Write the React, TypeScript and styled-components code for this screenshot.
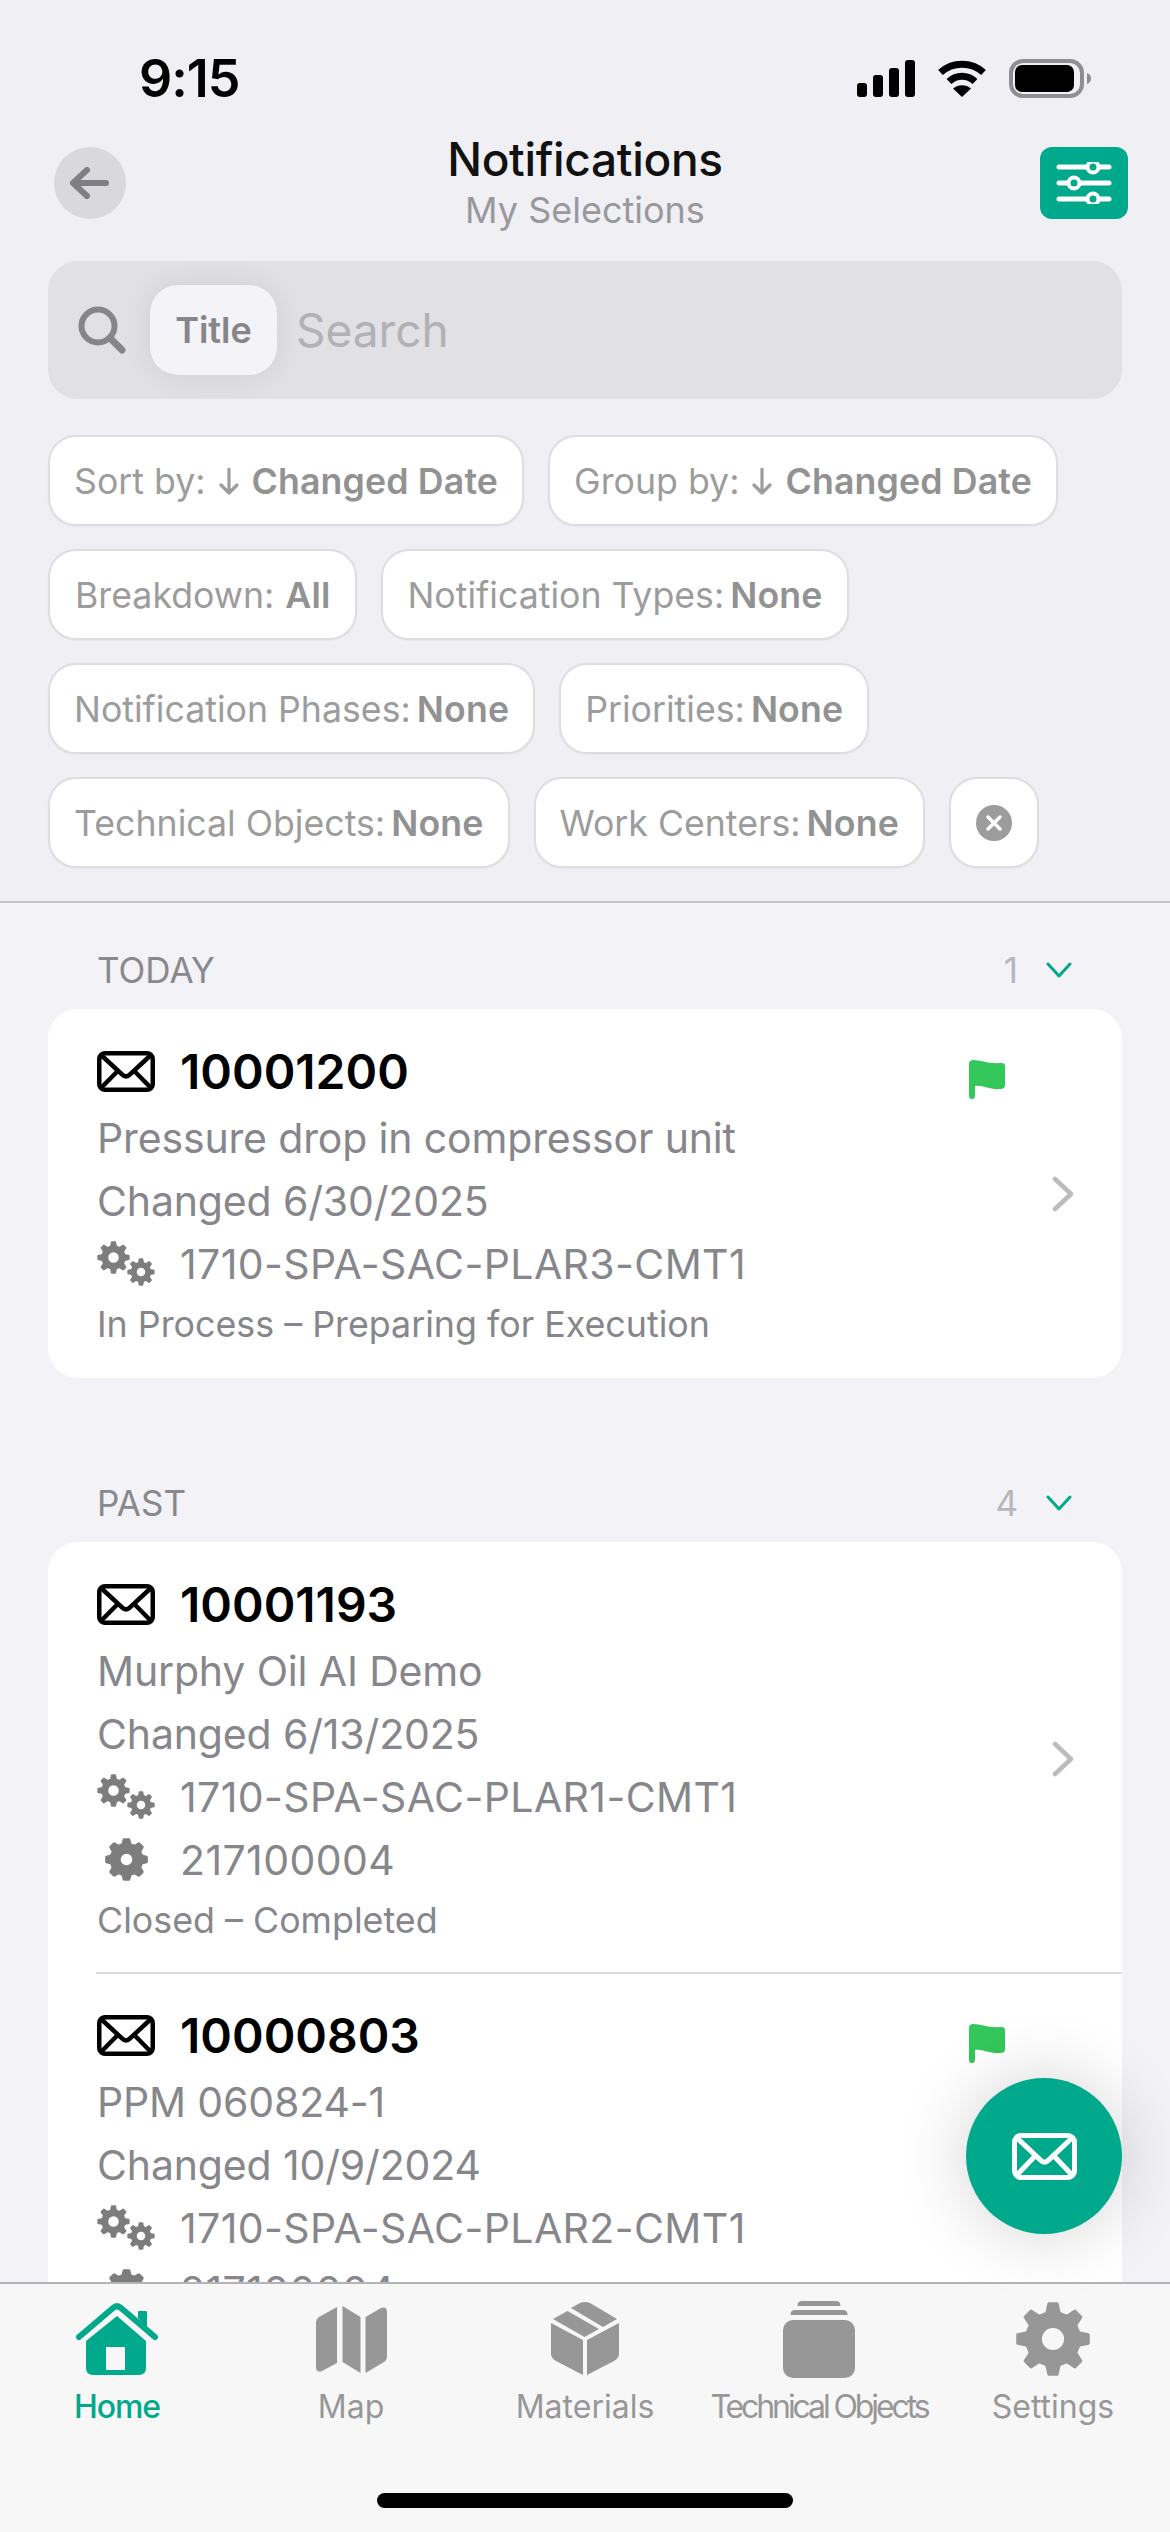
import * as React from 'react'
import styled, { createGlobalStyle } from 'styled-components'

const GREEN = '#00a98b'
const ICON_GREY = '#979797'

const GlobalStyle = createGlobalStyle`
	html, body {
		margin: 0;
		padding: 0;
		background: #f1f1f6;
		font-family: Inter, "Liberation Sans", sans-serif;
	}
	* { box-sizing: border-box; }
`

const Page = styled.div`
	position: relative;
	display: flex;
	flex-direction: column;
	width: 1170px;
	height: 2532px;
	overflow: hidden;
	background: #f2f2f7;
`

const TopPane = styled.div`
	flex: none;
	height: 903px;
	background: #efeff4;
	border-bottom: 2px solid #c3c3c8;
`

const StatusBar = styled.div`
	display: flex;
	align-items: center;
	justify-content: space-between;
	height: 147px;
	padding: 10px 79px 0 139px;
`

const Clock = styled.span`
	font-size: 52px;
	font-weight: 600;
	letter-spacing: -1px;
	color: #000;
`

const StatusIcons = styled.div`
	display: flex;
	align-items: center;
	gap: 22px;
`

const Header = styled.div`
	display: grid;
	grid-template-columns: 72px 1fr 88px;
	align-items: start;
	height: 114px;
	padding: 0 42px 0 54px;
`

const RoundButton = styled.div`
	display: flex;
	align-items: center;
	justify-content: center;
	width: 72px;
	height: 72px;
	border-radius: 50%;
	background: #d8d8dd;
`

const FilterButton = styled.div`
	display: flex;
	align-items: center;
	justify-content: center;
	width: 88px;
	height: 72px;
	border-radius: 12px;
	background: ${GREEN};
`

const HeaderTitle = styled.div`
	margin-top: -17px;
	padding-left: 4px;
	text-align: center;
`

const Title = styled.div`
	height: 58px;
	font-size: 46px;
	line-height: 58px;
	font-weight: 500;
	letter-spacing: -0.3px;
	color: #111;
`

const Subtitle = styled.div`
	font-size: 36px;
	line-height: 44px;
	color: #98989d;
`

const SearchBar = styled.div`
	display: flex;
	align-items: center;
	height: 138px;
	margin: 0 48px;
	padding: 0 0 0 30px;
	border-radius: 30px;
	background: #e0e0e5;
`

const SearchChip = styled.div`
	display: flex;
	align-items: center;
	justify-content: center;
	width: 127px;
	height: 90px;
	margin-left: 24px;
	border-radius: 28px;
	background: #f3f3f8;
	box-shadow: 0 0 28px rgba(0, 0, 0, 0.08);
	font-size: 36px;
	font-weight: 600;
	color: #85858a;
`

const SearchPlaceholder = styled.span`
	margin-left: 19px;
	font-size: 46px;
	color: #b1b1b6;
`

const Chips = styled.div`
	display: flex;
	flex-wrap: wrap;
	gap: 23px 24px;
	margin-top: 36px;
	padding: 0 48px;
`

const Chip = styled.div<{ $gap?: number; $padding?: number }>`
	display: flex;
	align-items: center;
	justify-content: center;
	gap: ${props => props.$gap ?? 6}px;
	height: 91px;
	padding: 0 ${props => props.$padding ?? 24}px;
	border: 2px solid #dddde2;
	border-radius: 28px;
	background: #fff;
	box-shadow: 0 1px 2px rgba(0, 0, 0, 0.04);
	font-size: 35.7px;
	color: #9c9c9c;
	white-space: nowrap;
`

const ChipValue = styled.b`
	font-weight: 600;
	letter-spacing: 0.15px;
	color: #929292;
`

const ClearChip = styled(Chip)`
	width: 90px;
	padding: 0;
`

const List = styled.div`
	flex: 1;
	min-height: 0;
	overflow: hidden;
	padding: 47px 48px 0;
`

const SectionHead = styled.div`
	display: flex;
	align-items: center;
	height: 40px;
	margin-bottom: 19px;
	padding: 0 50px 0 49px;
	font-size: 35px;
	color: #88888d;
`

const SectionName = styled.span`
	flex: 1;
`

const SectionCount = styled.span`
	margin-right: 28px;
	color: #b6b6bb;
`

const Card = styled.div`
	margin-bottom: 105px;
	border-radius: 30px;
	background: #fff;
`

const Item = styled.div`
	display: grid;
	grid-template-columns: 1fr 40px 24px;
	column-gap: 43px;
	padding: 31px 47px 26px 49px;
`

const ItemBody = styled.div`
	min-width: 0;
`

const ItemTitle = styled.div`
	display: flex;
	align-items: center;
	gap: 25px;
	height: 62px;
	margin-bottom: 4px;
	font-size: 48px;
	font-weight: 600;
	color: #000;
`

const Row = styled.div`
	display: flex;
	align-items: center;
	gap: 25px;
	height: 63px;
	font-size: 41px;
	letter-spacing: -0.15px;
	color: #86868b;
`

const RowCode = styled.span`
	letter-spacing: 0.4px;
`

const IconSlot = styled.span`
	display: flex;
	justify-content: center;
	width: 58px;
`

const StatusRow = styled.div`
	display: flex;
	align-items: center;
	height: 57px;
	font-size: 35.8px;
	color: #86868b;
`

const FlagSlot = styled.div`
	padding-top: 19px;
`

const ChevronSlot = styled.div`
	align-self: center;
`

const Divider = styled.div`
	height: 2px;
	margin: -2px 0 -1px 48px;
	background: #dcdce0;
`

const Fab = styled.div`
	position: absolute;
	right: 48px;
	bottom: 298px;
	display: flex;
	align-items: center;
	justify-content: center;
	width: 156px;
	height: 156px;
	border-radius: 50%;
	background: ${GREEN};
	box-shadow: 0 0 70px rgba(0, 0, 0, 0.18);
`

const TabBar = styled.div`
	position: relative;
	flex: none;
	display: flex;
	flex-direction: column;
	height: 250px;
	border-top: 2px solid #b4b4b8;
	background: #f7f7f7;
`

const Tabs = styled.div`
	display: grid;
	grid-template-columns: repeat(5, 234px);
	padding-top: 16px;
`

const Tab = styled.div<{ $active?: boolean }>`
	display: flex;
	flex-direction: column;
	align-items: center;
	font-size: 32px;
	color: ${props => (props.$active ? GREEN : ICON_GREY)};
	font-weight: ${props => (props.$active ? 500 : 400)};
	letter-spacing: ${props => (props.$active ? '-1.1px' : '0')};
`

const TabIcon = styled.div`
	display: flex;
	align-items: center;
	justify-content: center;
	height: 78px;
	margin-bottom: 9px;
`

const TabLabel = styled.span<{ $tight?: boolean }>`
	line-height: 40px;
	white-space: nowrap;
	${props => props.$tight && 'letter-spacing: -3.1px;'}
`

const HomeIndicator = styled.div`
	align-self: center;
	width: 416px;
	height: 15px;
	margin-top: auto;
	margin-bottom: 24px;
	border-radius: 8px;
	background: #000;
`

// teeth are straight-sided, rounded afterwards by the round stroke join
const gearPath = (cx: number, cy: number, outer: number, root: number, teeth: number) => {
	const points: string[] = []
	const step = (Math.PI * 2) / teeth
	for (let i = 0; i < teeth; i++) {
		const a = i * step - Math.PI / 2
		const offsets: [number, number][] = [
			[-0.3, root],
			[-0.15, outer],
			[0.15, outer],
			[0.3, root],
		]
		offsets.forEach(([o, r]) => {
			const t = a + o * step
			points.push(`${(cx + Math.cos(t) * r).toFixed(2)} ${(cy + Math.sin(t) * r).toFixed(2)}`)
		})
	}
	return `M${points.join('L')}Z`
}

const circlePath = (cx: number, cy: number, r: number) =>
	`M${cx - r} ${cy}a${r} ${r} 0 1 0 ${r * 2} 0a${r} ${r} 0 1 0 ${-r * 2} 0Z`

const SignalIcon = () => (
	<svg width="58" height="37" viewBox="0 0 58 37">
		<rect x="0" y="23" width="10" height="14" rx="3" />
		<rect x="16" y="15" width="10" height="22" rx="3" />
		<rect x="32" y="8" width="10" height="29" rx="3" />
		<rect x="48" y="0" width="10" height="37" rx="3" />
	</svg>
)

const WifiIcon = () => (
	<svg width="50" height="37" viewBox="0 0 50 37" fill="none">
		<path d="M3.5 12.5C15.5 1.5 34.5 1.5 46.5 12.5" stroke="#000" strokeWidth="7" />
		<path d="M12 21.5C19.5 14.5 30.5 14.5 38 21.5" stroke="#000" strokeWidth="7" />
		<path d="M25 37L16 28.5C21 24 29 24 34 28.5Z" fill="#000" />
	</svg>
)

const BatteryIcon = () => (
	<svg width="82" height="39" viewBox="0 0 82 39">
		<rect x="2" y="2" width="71" height="35" rx="12" fill="none" stroke="#8e8e93" strokeWidth="4" />
		<rect x="6" y="6" width="59" height="27" rx="7" fill="#000" />
		<path d="M78 14c3 1 4 3 4 5.500s-1 4.500-4 5.500Z" fill="#8e8e93" />
	</svg>
)

const BackIcon = () => (
	<svg width="40" height="32" viewBox="0 0 40 32" fill="none" stroke="#7e7e84" strokeWidth="6" strokeLinecap="round" strokeLinejoin="round">
		<path d="M17 3L3 16L17 29M3 16H36" />
	</svg>
)

const FilterIcon = () => (
	<svg width="56" height="42" viewBox="0 0 56 42" fill="none">
		{[
			{ y: 5, x: 37 },
			{ y: 21, x: 18 },
			{ y: 37, x: 37 },
		].map(({ y, x }) => (
			<React.Fragment key={y}>
				<line x1="3" x2="53" y1={y} y2={y} stroke="#fff" strokeWidth="5" strokeLinecap="round" />
				<circle cx={x} cy={y} r="5.500" fill={GREEN} stroke="#fff" strokeWidth="4" />
			</React.Fragment>
		))}
	</svg>
)

const SearchIcon = () => (
	<svg width="48" height="48" viewBox="0 0 48 48" fill="none" stroke="#85858a" strokeWidth="6" strokeLinecap="round">
		<circle cx="20" cy="20" r="16.500" />
		<path d="M32 32L44 44" strokeWidth="7" />
	</svg>
)

const ArrowDown = () => (
	<svg width="22" height="30" viewBox="0 0 22 30" fill="none" stroke="#9c9c9c" strokeWidth="3.200" strokeLinecap="round" strokeLinejoin="round">
		<path d="M11 3V27M3 19L11 27L19 19" />
	</svg>
)

const ClearIcon = () => (
	<svg width="36" height="36" viewBox="0 0 36 36">
		<circle cx="18" cy="18" r="18" fill="#9c9c9c" />
		<path d="M12 12L24 24M24 12L12 24" stroke="#fff" strokeWidth="3.500" strokeLinecap="round" />
	</svg>
)

const ChevronDown = () => (
	<svg width="26" height="16" viewBox="0 0 26 16" fill="none" stroke={GREEN} strokeWidth="3" strokeLinecap="round" strokeLinejoin="round">
		<path d="M2 2L13 14L24 2" />
	</svg>
)

const ChevronRight = () => (
	<svg width="24" height="36" viewBox="0 0 24 36" fill="none" stroke="#bcbcbf" strokeWidth="4.500" strokeLinecap="round" strokeLinejoin="round">
		<path d="M4 3L20 18L4 33" />
	</svg>
)

const MailIcon = (props: { color: string; width: number; height: number; stroke: number }) => {
	const { color, width, height, stroke } = props
	const inset = stroke / 2
	const mid = width / 2
	const flapY = height * 0.62
	return (
		<svg width={width} height={height} viewBox={`0 0 ${width} ${height}`} fill="none" stroke={color} strokeWidth={stroke}>
			<rect x={inset} y={inset} width={width - stroke} height={height - stroke} rx={stroke * 1.3} />
			<path d={`M${inset + 1} ${inset + 1}L${mid - 4} ${flapY - 2}Q${mid} ${flapY + 2} ${mid + 4} ${flapY - 2}L${width - inset - 1} ${inset + 1}`} />
			<path d={`M${inset + 1} ${height - inset - 1}L${mid - width * 0.13} ${height * 0.47}M${width - inset - 1} ${height - inset - 1}L${mid + width * 0.13} ${height * 0.47}`} />
		</svg>
	)
}

const FlagIcon = () => (
	<svg width="38" height="40" viewBox="0 0 38 40" fill="#34c759">
		<path d="M1 5C1 2 3 1 5 1C13 1 20 5 33 4C36 4 37 5 37 7V26C37 29 35 30 32 30C22 31 15 26 7 27V37C7 39 6 40 4 40C2 40 1 39 1 37Z" />
	</svg>
)

const GearsIcon = () => (
	<svg width="58" height="45" viewBox="0 0 58 45">
		<path d={gearPath(16.500, 16.500, 15.500, 11.500, 8) + circlePath(16.500, 16.500, 6)} fill="#7d7d7d" stroke="#7d7d7d" strokeWidth="1.500" strokeLinejoin="round" fillRule="evenodd" />
		<path d={gearPath(44, 31, 13, 9.500, 8) + circlePath(44, 31, 5)} fill="#7d7d7d" stroke="#7d7d7d" strokeWidth="1.500" strokeLinejoin="round" fillRule="evenodd" />
	</svg>
)

const GearIcon = (props: { size: number; color: string }) => {
	const { size, color } = props
	const c = size / 2
	return (
		<svg width={size} height={size} viewBox={`0 0 ${size} ${size}`}>
			<path
				d={gearPath(c, c, c - 1.500, c * 0.72, 8) + circlePath(c, c, c * 0.34)}
				fill={color}
				stroke={color}
				strokeWidth="3"
				strokeLinejoin="round"
				fillRule="evenodd"
			/>
		</svg>
	)
}

const HomeIcon = () => (
	<svg width="82" height="72" viewBox="0 0 82 72" fill={GREEN}>
		<path d="M3 34L37 5Q41 1.500 45 5L79 34" fill="none" stroke={GREEN} strokeWidth="6" strokeLinecap="round" strokeLinejoin="round" />
		<path d="M62 15V9Q62 8 63 8H70Q71 8 71 9V25Z" />
		<path fillRule="evenodd" d="M41 13L70 38V65Q70 72 63 72H17Q10 72 10 65V38ZM30 44V67H49V44Z" />
	</svg>
)

const MapIcon = () => (
	<svg width="71" height="67" viewBox="0 0 71 67" fill={ICON_GREY}>
		<path d="M21 1V57L6 65Q0 67 0 61V16Q0 13 3 11Z" />
		<path d="M26.500 0L44.500 11V67L26.500 56Z" />
		<path d="M49.500 11L65 2Q71 0 71 6V50Q71 54 68 56L49.500 67Z" />
	</svg>
)

const BoxIcon = () => (
	<svg width="72" height="74" viewBox="0 0 72 74" fill={ICON_GREY}>
		<path d="M22 6L31 1Q36 -1 41 1L68 17L54 25Z" />
		<path d="M4 17L18.500 9L50 27L35.500 35Z" />
		<path d="M2 21L34 38V73L7 59Q2 56 2 52Z" />
		<path d="M70 21L38 38V73L65 59Q70 56 70 52Z" />
	</svg>
)

const StackIcon = () => (
	<svg width="72" height="77" viewBox="0 0 72 77" fill={ICON_GREY}>
		<path d="M14.500 5Q14.500 0 19 0H53Q57.500 0 57.500 5Z" />
		<path d="M7.500 14Q7.500 9 12 9H60Q64.500 9 64.500 14Z" />
		<rect x="0" y="19" width="72" height="58" rx="10" />
	</svg>
)

type Notification = {
	id: string
	title: string
	changed: string
	object: string
	equipment?: string
	status: string
	flagged?: boolean
}

const today: Notification[] = [
	{
		id: '10001200',
		title: 'Pressure drop in compressor unit',
		changed: 'Changed 6/30/2025',
		object: '1710-SPA-SAC-PLAR3-CMT1',
		status: 'In Process – Preparing for Execution',
		flagged: true,
	},
]

const past: Notification[] = [
	{
		id: '10001193',
		title: 'Murphy Oil AI Demo',
		changed: 'Changed 6/13/2025',
		object: '1710-SPA-SAC-PLAR1-CMT1',
		equipment: '217100004',
		status: 'Closed – Completed',
	},
	{
		id: '10000803',
		title: 'PPM 060824-1',
		changed: 'Changed 10/9/2024',
		object: '1710-SPA-SAC-PLAR2-CMT1',
		equipment: '217100004',
		status: 'Closed – Completed',
		flagged: true,
	},
]

const NotificationItem = (props: { item: Notification }) => {
	const { id, title, changed, object, equipment, status, flagged } = props.item
	return (
		<Item>
			<ItemBody>
				<ItemTitle>
					<MailIcon color="#000" width={58} height={41} stroke={4.500} />
					{id}
				</ItemTitle>
				<Row>{title}</Row>
				<Row>{changed}</Row>
				<Row>
					<GearsIcon />
					<RowCode>{object}</RowCode>
				</Row>
				{equipment && (
					<Row>
						<IconSlot>
							<GearIcon size={43} color="#7d7d7d" />
						</IconSlot>
						<RowCode>{equipment}</RowCode>
					</Row>
				)}
				<StatusRow>{status}</StatusRow>
			</ItemBody>
			<FlagSlot>{flagged && <FlagIcon />}</FlagSlot>
			<ChevronSlot>
				<ChevronRight />
			</ChevronSlot>
		</Item>
	)
}

const Section = (props: { name: string; count: number; items: Notification[] }) => (
	<>
		<SectionHead>
			<SectionName>{props.name}</SectionName>
			<SectionCount>{props.count}</SectionCount>
			<ChevronDown />
		</SectionHead>
		<Card>
			{props.items.map((item, i) => (
				<React.Fragment key={item.id}>
					{i > 0 && <Divider />}
					<NotificationItem item={item} />
				</React.Fragment>
			))}
		</Card>
	</>
)

const filters = [
	{ label: 'Breakdown:', value: 'All', gap: 11, padding: 25 },
	{ label: 'Notification Types:', value: 'None' },
	{ label: 'Notification Phases:', value: 'None' },
	{ label: 'Priorities:', value: 'None' },
	{ label: 'Technical Objects:', value: 'None' },
	{ label: 'Work Centers:', value: 'None' },
]

const tabs = [
	{ label: 'Home', icon: <HomeIcon />, active: true },
	{ label: 'Map', icon: <MapIcon /> },
	{ label: 'Materials', icon: <BoxIcon /> },
	{ label: 'Technical Objects', icon: <StackIcon />, tight: true },
	{ label: 'Settings', icon: <GearIcon size={74} color={ICON_GREY} /> },
]

const App = () => (
	<Page>
		<GlobalStyle />
		<TopPane>
			<StatusBar>
				<Clock>9:15</Clock>
				<StatusIcons>
					<SignalIcon />
					<WifiIcon />
					<BatteryIcon />
				</StatusIcons>
			</StatusBar>
			<Header>
				<RoundButton>
					<BackIcon />
				</RoundButton>
				<HeaderTitle>
					<Title>Notifications</Title>
					<Subtitle>My Selections</Subtitle>
				</HeaderTitle>
				<FilterButton>
					<FilterIcon />
				</FilterButton>
			</Header>
			<SearchBar>
				<SearchIcon />
				<SearchChip>Title</SearchChip>
				<SearchPlaceholder>Search</SearchPlaceholder>
			</SearchBar>
			<Chips>
				<Chip $gap={12}>
					Sort by:
					<ArrowDown />
					<ChipValue>Changed Date</ChipValue>
				</Chip>
				<Chip $gap={12}>
					Group by:
					<ArrowDown />
					<ChipValue>Changed Date</ChipValue>
				</Chip>
				{filters.map(filter => (
					<Chip key={filter.label} $gap={filter.gap} $padding={filter.padding}>
						{filter.label}
						<ChipValue>{filter.value}</ChipValue>
					</Chip>
				))}
				<ClearChip>
					<ClearIcon />
				</ClearChip>
			</Chips>
		</TopPane>
		<List>
			<Section name="TODAY" count={1} items={today} />
			<Section name="PAST" count={4} items={past} />
		</List>
		<TabBar>
			<Tabs>
				{tabs.map(tab => (
					<Tab key={tab.label} $active={tab.active}>
						<TabIcon>{tab.icon}</TabIcon>
						<TabLabel $tight={tab.tight}>{tab.label}</TabLabel>
					</Tab>
				))}
			</Tabs>
			<HomeIndicator />
		</TabBar>
		<Fab>
			<MailIcon color="#fff" width={65} height={47} stroke={5} />
		</Fab>
	</Page>
)

export default App
